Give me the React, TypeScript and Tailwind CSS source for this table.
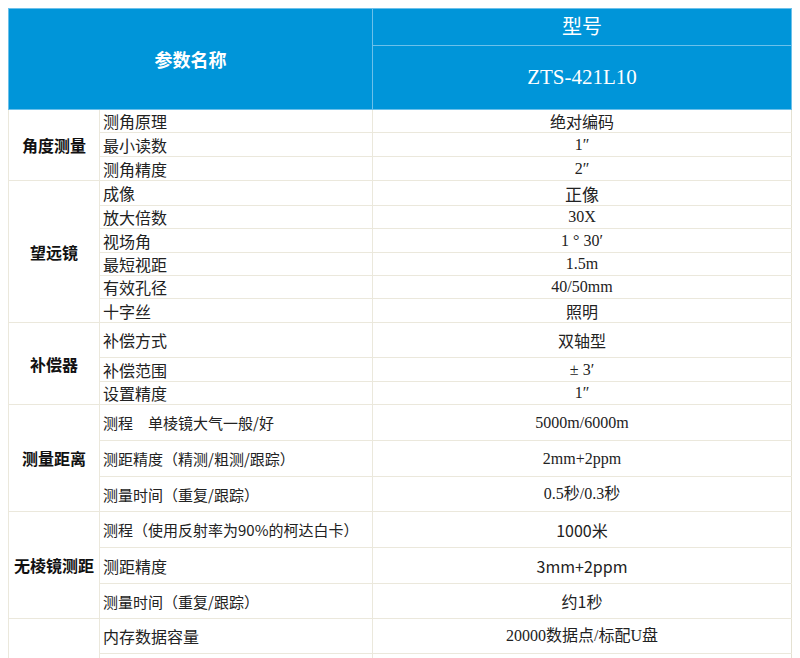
import React from "react";

type Row = { label: string; value: string; vf: "sans" | "serif"; h: number; lsize?: string; vsize?: string };
type Group = { name: string; rows: Row[] };

const groups: Group[] = [
  {
    name: "角度测量",
    rows: [
      { label: "测角原理", value: "绝对编码", vf: "sans", h: 23 },
      { label: "最小读数", value: "1″", vf: "serif", h: 24 },
      { label: "测角精度", value: "2″", vf: "serif", h: 24 },
    ],
  },
  {
    name: "望远镜",
    rows: [
      { label: "成像", value: "正像", vf: "sans", h: 25, vsize: "text-[17px]" },
      { label: "放大倍数", value: "30X", vf: "serif", h: 23 },
      { label: "视场角", value: "1 ° 30′", vf: "serif", h: 24 },
      { label: "最短视距", value: "1.5m", vf: "serif", h: 23 },
      { label: "有效孔径", value: "40/50mm", vf: "serif", h: 23 },
      { label: "十字丝", value: "照明", vf: "sans", h: 24 },
    ],
  },
  {
    name: "补偿器",
    rows: [
      { label: "补偿方式", value: "双轴型", vf: "sans", h: 35 },
      { label: "补偿范围", value: "± 3′", vf: "serif", h: 24 },
      { label: "设置精度", value: "1″", vf: "serif", h: 23 },
    ],
  },
  {
    name: "测量距离",
    rows: [
      { label: "测程　单棱镜大气一般/好", value: "5000m/6000m", vf: "serif", h: 36, lsize: "text-[15px]" },
      { label: "测距精度（精测/粗测/跟踪）", value: "2mm+2ppm", vf: "serif", h: 36, lsize: "text-[15px]" },
      { label: "测量时间（重复/跟踪）", value: "0.5秒/0.3秒", vf: "serif", h: 35, lsize: "text-[15px]" },
    ],
  },
  {
    name: "无棱镜测距",
    rows: [
      { label: "测程（使用反射率为90%的柯达白卡）", value: "1000米", vf: "sans", h: 36, lsize: "text-[15px]" },
      { label: "测距精度", value: "3mm+2ppm", vf: "sans", h: 36 },
      { label: "测量时间（重复/跟踪）", value: "约1秒", vf: "sans", h: 35, lsize: "text-[15px]" },
    ],
  },
  {
    name: "",
    rows: [
      { label: "内存数据容量", value: "20000数据点/标配U盘", vf: "serif", h: 35 },
      { label: "", value: "", vf: "serif", h: 35 },
    ],
  },
];

const SANS = "font-['Noto_Sans_CJK_SC','Noto_Sans',sans-serif]";
const SERIF = "font-['Liberation_Serif','Noto_Sans_CJK_SC',serif]";

export default function App() {
  return (
    <div className="h-[658px] w-[800px] overflow-hidden bg-white">
      <div className="pl-[8px] pt-[8px]">
        <table className="table-fixed border-collapse w-[783px]">
          <colgroup>
            <col className="w-[91px]" />
            <col className="w-[273px]" />
            <col className="w-[419px]" />
          </colgroup>
          <thead>
            <tr className="h-[37px]">
              <th
                colSpan={2}
                rowSpan={2}
                className={`bg-[#0095d9] border border-[#6cc0ea] text-white text-[18px] font-bold ${SANS} text-center align-middle`}
              >
                参数名称
              </th>
              <th className={`bg-[#0095d9] border border-[#6cc0ea] text-white text-[20px] font-normal ${SERIF} text-center align-middle`}>
                型号
              </th>
            </tr>
            <tr className="h-[64px]">
              <th className={`bg-[#0095d9] border border-[#6cc0ea] text-white text-[21px] font-normal ${SERIF} text-center align-middle`}>
                ZTS-421L10
              </th>
            </tr>
          </thead>
          <tbody>
            {groups.map((g, gi) =>
              g.rows.map((r, i) => (
                <tr key={gi + "-" + i} style={{ height: r.h }}>
                  {i === 0 && (
                    <td
                      rowSpan={g.rows.length}
                      className={`border border-[#ebe8dc] text-center align-middle text-[16px] font-bold text-[#111] ${SANS} whitespace-nowrap`}
                    >
                      {g.name}
                    </td>
                  )}
                  <td
                    className={`border border-[#ebe8dc] pl-[3px] align-middle ${r.lsize ?? "text-[16px]"} leading-none text-[#222] ${SANS} whitespace-nowrap`}
                  >
                    {r.label}
                  </td>
                  <td
                    className={`border border-[#ebe8dc] border-r-[#e4e1d2] text-center align-middle ${r.vsize ?? "text-[16px]"} leading-none text-[#222] whitespace-nowrap ${
                      r.vf === "serif" ? SERIF : SANS
                    }`}
                  >
                    {r.value}
                  </td>
                </tr>
              ))
            )}
          </tbody>
        </table>
      </div>
    </div>
  );
}
